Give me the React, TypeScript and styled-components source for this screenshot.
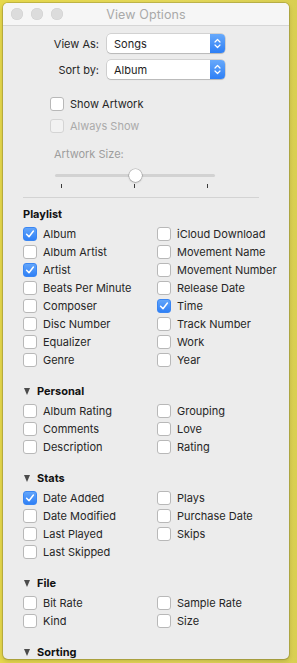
import React from 'react';
import styled, { createGlobalStyle } from 'styled-components';

const GlobalStyles = createGlobalStyle`
  html, body {
    margin: 0;
    padding: 0;
  }
  body {
    font-family: Inter, "Noto Sans", "Liberation Sans", sans-serif;
    -webkit-font-smoothing: antialiased;
  }
`;

const Desktop = styled.div`
  width: 297px;
  height: 663px;
  box-sizing: border-box;
  padding: 3px 0 0 3px;
  overflow: hidden;
  background: linear-gradient(90deg, #e6d84c 0%, #e4d85a 60%, #d9cf52 100%);
`;

const Window = styled.div`
  width: 286px;
  height: 656px;
  display: flex;
  flex-direction: column;
  background: #ececec;
  border-radius: 5px;
  overflow: hidden;
  box-shadow: 0 0 0 1px rgba(0, 0, 0, 0.14), 0 2px 5px rgba(0, 0, 0, 0.18);
`;

const TitleBar = styled.div`
  height: 22px;
  flex: none;
  display: grid;
  grid-template-columns: 1fr auto 1fr;
  align-items: center;
  background: #f6f6f6;
  border-bottom: 1px solid #d6d6d6;
`;

const Lights = styled.div`
  display: flex;
  gap: 8px;
  padding-left: 8px;
`;

const Light = styled.span`
  width: 12px;
  height: 12px;
  border-radius: 50%;
  background: #dcdcdc;
  box-shadow: inset 0 0 0 0.5px #cfcfcf;
`;

const Title = styled.div`
  font-size: 12.5px;
  color: #a9a9a9;
  letter-spacing: 0.1px;
`;

const Content = styled.div`
  padding-top: 8px;
`;

const Form = styled.div`
  display: grid;
  grid-template-columns: 96px 118px;
  column-gap: 8px;
  row-gap: 7px;
  align-items: center;
`;

const FieldLabel = styled.div`
  text-align: right;
  font-size: 11px;
  color: #262626;
`;

const PopUp = styled.div`
  height: 19px;
  box-sizing: border-box;
  display: flex;
  align-items: stretch;
  background: #fff;
  border-radius: 4px;
  box-shadow: 0 0 0 0.5px rgba(0, 0, 0, 0.22), 0 1px 1px rgba(0, 0, 0, 0.12);
  overflow: hidden;
`;

const PopUpValue = styled.div`
  flex: 1;
  display: flex;
  align-items: center;
  padding-left: 7px;
  font-size: 11px;
  color: #1e1e1e;
`;

const Stepper = styled.div`
  width: 15px;
  display: flex;
  align-items: center;
  justify-content: center;
  background: linear-gradient(#67a9fb, #2e7ff5);
`;

const Options = styled.div`
  margin-top: 16px;
  padding-left: 47px;
  display: flex;
  flex-direction: column;
  gap: 4px;
`;

const Row = styled.label`
  height: 18px;
  display: flex;
  align-items: center;
  gap: 6px;
  font-size: 11px;
  color: ${(p: { $disabled?: boolean }) => (p.$disabled ? '#aaaaaa' : '#262626')};
  white-space: nowrap;
`;

const Box = styled.span<{ $checked?: boolean; $disabled?: boolean }>`
  width: 14px;
  height: 14px;
  flex: none;
  box-sizing: border-box;
  border-radius: 3px;
  display: flex;
  align-items: center;
  justify-content: center;
  background: ${(p) => (p.$checked ? 'linear-gradient(#62a5fa, #2f80f6)' : p.$disabled ? '#f2f2f2' : '#fff')};
  border: 1px solid ${(p) => (p.$checked ? '#3a86f3' : p.$disabled ? '#d4d4d4' : '#b8b8b8')};
`;

const SizeLabel = styled.div`
  margin-top: 12px;
  padding-left: 51px;
  height: 14px;
  line-height: 14px;
  font-size: 11px;
  color: #9d9d9d;
`;

const Slider = styled.div`
  margin: 8px 0 0 52px;
  width: 160px;
  height: 13px;
  position: relative;
  display: flex;
  align-items: center;
`;

const Track = styled.div`
  width: 100%;
  height: 3px;
  border-radius: 2px;
  background: #d2d2d2;
`;

const Knob = styled.div`
  position: absolute;
  top: 0;
  width: 13px;
  height: 13px;
  margin-left: -6.5px;
  border-radius: 50%;
  background: #fff;
  box-shadow: 0 0 0 0.5px rgba(0, 0, 0, 0.25), 0 1px 2px rgba(0, 0, 0, 0.2);
`;

const Ticks = styled.div`
  margin: 2px 0 0 58px;
  width: 147px;
  display: flex;
  justify-content: space-between;
`;

const Tick = styled.span`
  width: 1px;
  height: 4px;
  background: #3a3a3a;
`;

const Separator = styled.div`
  margin: 9px 0 0 20px;
  width: 236px;
  height: 1px;
  background: #d3d3d3;
`;

const Sections = styled.div`
  margin-top: 8px;
  padding-left: 20px;
  display: flex;
  flex-direction: column;
  gap: 14px;
`;

const Header = styled.div`
  height: 16px;
  display: flex;
  align-items: center;
  gap: 7px;
  font-size: 11px;
  font-weight: 700;
  color: #111;
`;

const Disclosure = styled.span`
  margin-left: 1px;
  width: 0;
  height: 0;
  border-left: 3.5px solid transparent;
  border-right: 3.5px solid transparent;
  border-top: 7px solid #4b4b4b;
`;

const Columns = styled.div`
  margin-top: 3px;
  display: grid;
  grid-template-columns: 134px 1fr;
`;

const Column = styled.div`
  display: flex;
  flex-direction: column;
`;

const Check = () => (
  <svg width="10" height="10" viewBox="0 0 10 10">
    <path d="M1.6 5.3 L4 7.8 L8.4 2" fill="none" stroke="#fff" strokeWidth="1.5" strokeLinecap="round" strokeLinejoin="round" />
  </svg>
);

const Chevrons = () => (
  <svg width="7" height="11" viewBox="0 0 7 11">
    <path d="M1 4 L3.5 1.5 L6 4 M1 7 L3.5 9.5 L6 7" fill="none" stroke="#fff" strokeWidth="1.2" strokeLinecap="round" strokeLinejoin="round" />
  </svg>
);

type Item = [string, boolean?];

const CheckRow = ({ label, checked, disabled }: { label: string; checked?: boolean; disabled?: boolean }) => (
  <Row $disabled={disabled}>
    <Box $checked={checked} $disabled={disabled}>{checked && <Check />}</Box>
    {label}
  </Row>
);

const sections: { title: string; collapsible: boolean; left: Item[]; right: Item[] }[] = [
  {
    title: 'Playlist',
    collapsible: false,
    left: [['Album', true], ['Album Artist'], ['Artist', true], ['Beats Per Minute'], ['Composer'], ['Disc Number'], ['Equalizer'], ['Genre']],
    right: [['iCloud Download'], ['Movement Name'], ['Movement Number'], ['Release Date'], ['Time', true], ['Track Number'], ['Work'], ['Year']],
  },
  {
    title: 'Personal',
    collapsible: true,
    left: [['Album Rating'], ['Comments'], ['Description']],
    right: [['Grouping'], ['Love'], ['Rating']],
  },
  {
    title: 'Stats',
    collapsible: true,
    left: [['Date Added', true], ['Date Modified'], ['Last Played'], ['Last Skipped']],
    right: [['Plays'], ['Purchase Date'], ['Skips']],
  },
  {
    title: 'File',
    collapsible: true,
    left: [['Bit Rate'], ['Kind']],
    right: [['Sample Rate'], ['Size']],
  },
  { title: 'Sorting', collapsible: true, left: [], right: [] },
];

function App() {
  return (
    <Desktop>
      <GlobalStyles />
      <Window>
        <TitleBar>
          <Lights>
            <Light />
            <Light />
            <Light />
          </Lights>
          <Title>View Options</Title>
          <span />
        </TitleBar>
        <Content>
          <Form>
            <FieldLabel>View As:</FieldLabel>
            <PopUp>
              <PopUpValue>Songs</PopUpValue>
              <Stepper><Chevrons /></Stepper>
            </PopUp>
            <FieldLabel>Sort by:</FieldLabel>
            <PopUp>
              <PopUpValue>Album</PopUpValue>
              <Stepper><Chevrons /></Stepper>
            </PopUp>
          </Form>
          <Options>
            <CheckRow label="Show Artwork" />
            <CheckRow label="Always Show" disabled />
          </Options>
          <SizeLabel>Artwork Size:</SizeLabel>
          <Slider>
            <Track />
            <Knob style={{ left: '50%' }} />
          </Slider>
          <Ticks>
            <Tick />
            <Tick />
            <Tick />
          </Ticks>
          <Separator />
          <Sections>
            {sections.map((s) => (
              <div key={s.title}>
                <Header>
                  {s.collapsible && <Disclosure />}
                  {s.title}
                </Header>
                {s.left.length > 0 && (
                  <Columns>
                    <Column>
                      {s.left.map(([label, checked]) => (
                        <CheckRow key={label} label={label} checked={checked} />
                      ))}
                    </Column>
                    <Column>
                      {s.right.map(([label, checked]) => (
                        <CheckRow key={label} label={label} checked={checked} />
                      ))}
                    </Column>
                  </Columns>
                )}
              </div>
            ))}
          </Sections>
        </Content>
      </Window>
    </Desktop>
  );
}

export default App;
